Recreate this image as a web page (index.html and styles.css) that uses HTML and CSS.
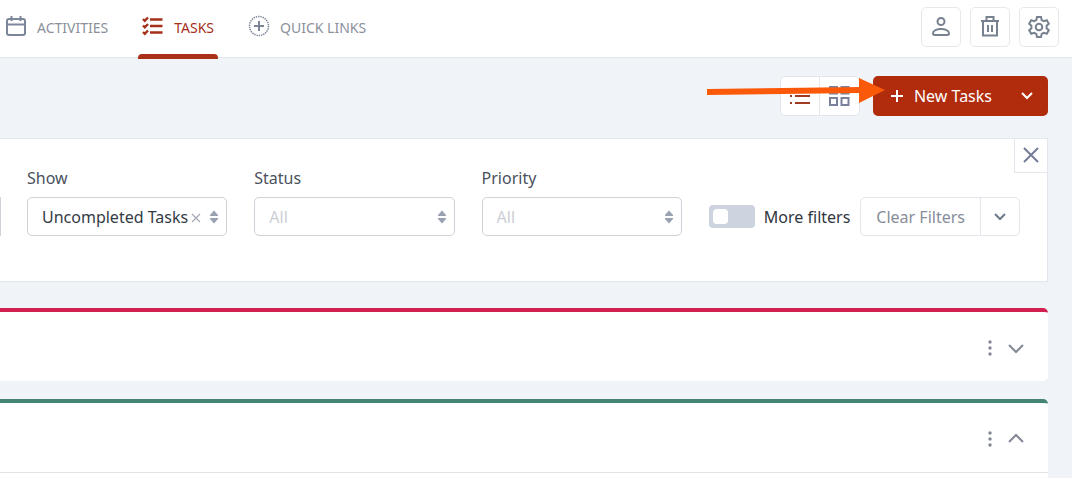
FILE: index.html
```html
<!DOCTYPE html>
<html lang="en">
<head>
    <meta charset="UTF-8">
    <meta name="viewport" content="width=device-width, initial-scale=1.0">
    <title>Tasks</title>
    <link rel="stylesheet" href="styles.css">
</head>
<body>
    <header class="topbar">
        <nav class="tabs">
            <a class="tab" href="#activities">
                <svg class="tab-icon" viewBox="0 0 22 22"><rect x="2" y="4" width="18" height="16" rx="2"/><path d="M2 9.500H20M6.500 1V6M15.500 1V6"/></svg>
                Activities
            </a>
            <a class="tab active" href="#tasks">
                <svg class="tab-icon" viewBox="0 0 22 22"><path d="M8 4.500H20.500M8 11H20.500M8 17.500H20.500M1 4L2.800 5.800L6 2.500M1 10.500L2.800 12.300L6 9M1 17L2.800 18.800L6 15.500" stroke-width="2.400"/></svg>
                Tasks
            </a>
            <a class="tab" href="#links">
                <svg class="tab-icon" viewBox="0 0 22 22"><circle cx="11" cy="11" r="9.500" stroke-width="1.500" stroke-dasharray="1.400 0.890"/><path d="M11 6V16M6 11H16"/></svg>
                Quick Links
            </a>
        </nav>
        <div class="tools">
            <button class="tool" aria-label="Profile">
                <svg viewBox="0 0 24 24"><circle cx="12" cy="6.500" r="3.500"/><path d="M4 18.500C4 12.500 20 12.500 20 18.500C20 19.500 19 20 18 20H6C5 20 4 19.500 4 18.500Z"/></svg>
            </button>
            <button class="tool" aria-label="Trash">
                <svg viewBox="0 0 24 24"><path d="M3 6H21M5 6V20.500H19V6M8.500 6V2H15.500V6M10 10V17M14 10V17"/></svg>
            </button>
            <button class="tool" aria-label="Settings">
                <svg viewBox="0 0 24 24"><circle cx="12" cy="12" r="3.300"/><path d="M10 2H14L14.700 5L16.800 6.200L19.800 5.300L21.800 8.700L19.600 10.800V13.200L21.800 15.300L19.800 18.700L16.800 17.800L14.700 19L14 22H10L9.300 19L7.200 17.800L4.200 18.700L2.200 15.300L4.400 13.200V10.800L2.200 8.700L4.200 5.300L7.200 6.200L9.300 5Z"/></svg>
            </button>
        </div>
    </header>

    <main class="content">
        <div class="toolbar">
            <div class="views">
                <button class="view active" aria-label="List view">
                    <svg viewBox="0 0 22 22"><path d="M6 4H21M6 11H21M6 18H21M1 4H3M1 11H3M1 18H3"/></svg>
                </button>
                <button class="view" aria-label="Grid view">
                    <svg viewBox="0 0 22 22"><path d="M2 2H9V8.500H2ZM13.500 2H20.500V8.500H13.500ZM2 13H9V20H2ZM13.500 13H20.500V20H13.500Z"/></svg>
                </button>
            </div>
            <div class="new-tasks">
                <button class="new-main">
                    <svg viewBox="0 0 14 14"><path d="M7 1V13M1 7H13"/></svg>
                    New Tasks
                </button>
                <button class="new-more" aria-label="More options">
                    <svg viewBox="0 0 14 14"><path d="M2 4L7 9L12 4"/></svg>
                </button>
            </div>
            <svg class="pointer" viewBox="0 0 178 26"><path d="M0 12L153 10V16L0 18Z"/><path d="M152 1L178 13L152 26Z"/></svg>
        </div>

        <section class="filters">
            <button class="close" aria-label="Close filters">
                <svg viewBox="0 0 18 18"><path d="M2 2L16 16M16 2L2 16"/></svg>
            </button>
            <div class="filter-edge"></div>
            <div class="field">
                <label for="show">Show</label>
                <div class="select">
                    <select id="show"><option>Uncompleted Tasks</option></select>
                    <button class="clear" aria-label="Clear show filter"><svg viewBox="0 0 10 10"><path d="M1 1L9 9M9 1L1 9"/></svg></button>
                    <svg class="sort" viewBox="0 0 10 14"><path d="M1 6V5L5 0.500L9 5V6ZM1 8V9L5 13.500L9 9V8Z"/></svg>
                </div>
            </div>
            <div class="field">
                <label for="status">Status</label>
                <div class="select">
                    <select id="status" class="empty"><option>All</option></select>
                    <svg class="sort" viewBox="0 0 10 14"><path d="M1 6V5L5 0.500L9 5V6ZM1 8V9L5 13.500L9 9V8Z"/></svg>
                </div>
            </div>
            <div class="field">
                <label for="priority">Priority</label>
                <div class="select">
                    <select id="priority" class="empty"><option>All</option></select>
                    <svg class="sort" viewBox="0 0 10 14"><path d="M1 6V5L5 0.500L9 5V6ZM1 8V9L5 13.500L9 9V8Z"/></svg>
                </div>
            </div>
            <div class="filter-actions">
                <label class="switch"><input type="checkbox">More filters</label>
                <div class="clear-group">
                    <button class="clear-main">Clear Filters</button>
                    <button class="clear-more" aria-label="More filter options">
                        <svg viewBox="0 0 14 14"><path d="M2 4L7 9L12 4"/></svg>
                    </button>
                </div>
            </div>
        </section>

        <section class="group red">
            <div class="group-head">
                <button class="group-btn dots" aria-label="Group menu"><svg viewBox="0 0 6 18"><circle cx="3" cy="3" r="1.700"/><circle cx="3" cy="9" r="1.700"/><circle cx="3" cy="15" r="1.700"/></svg></button>
                <button class="group-btn chevron" aria-label="Expand"><svg viewBox="0 0 18 18"><path d="M2 6L9 13L16 6"/></svg></button>
            </div>
        </section>
        <section class="group green">
            <div class="group-head">
                <button class="group-btn dots" aria-label="Group menu"><svg viewBox="0 0 6 18"><circle cx="3" cy="3" r="1.700"/><circle cx="3" cy="9" r="1.700"/><circle cx="3" cy="15" r="1.700"/></svg></button>
                <button class="group-btn chevron" aria-label="Collapse"><svg viewBox="0 0 18 18"><path d="M2 12L9 5L16 12"/></svg></button>
            </div>
            <div class="group-body"></div>
        </section>
    </main>
</body>
</html>
```
FILE: styles.css
```css
* {
    box-sizing: border-box;
}
body {
    display: flex;
    flex-direction: column;
    margin: 0;
    min-height: 100vh;
    background: #f0f3f8;
    color: #4a515c;
    font-family: "Noto Sans", "Open Sans", sans-serif;
    font-size: 16px;
    line-height: 22px;
}
button {
    display: flex;
    align-items: center;
    justify-content: center;
    margin: 0;
    padding: 0;
    border: none;
    background: none;
    color: inherit;
    font: inherit;
    cursor: pointer;
}
svg {
    display: block;
    flex: none;
    fill: none;
    stroke: currentColor;
    stroke-width: 2;
}

/* top bar */
.topbar {
    display: flex;
    justify-content: space-between;
    height: 58px;
    padding: 0 13px 0 1px;
    background: #fff;
    border-bottom: 1px solid #e3e6ec;
}
.tabs {
    display: flex;
    gap: 26px;
}
.tab {
    position: relative;
    display: flex;
    align-items: center;
    gap: 10px;
    padding: 0 4px 2px;
    color: #8b919b;
    font-size: 14px;
    text-decoration: none;
    text-transform: uppercase;
}
.tab-icon {
    width: 22px;
    height: 22px;
    margin-bottom: 3px;
    color: #7c8599;
}
.tab.active,
.tab.active .tab-icon {
    color: #a5301a;
}
.tab.active::after {
    content: "";
    position: absolute;
    left: 0;
    right: 0;
    bottom: -2px;
    height: 5px;
    border-radius: 4px 4px 0 0;
    background: #a9311a;
}
.tools {
    display: flex;
    gap: 9px;
    padding-top: 7px;
}
.tool {
    width: 40px;
    height: 40px;
    border: 1px solid #e6e8ed;
    border-radius: 5px;
    color: #77818f;
}
.tool svg {
    width: 24px;
    height: 24px;
}

/* toolbar */
.content {
    display: flex;
    flex: 1;
    flex-direction: column;
    padding: 18px 24px 0 0;
}
.toolbar {
    position: relative;
    display: flex;
    justify-content: flex-end;
    gap: 13px;
}
.views {
    display: flex;
    border: 1px solid #e3e6ec;
    border-radius: 5px;
    background: #fff;
}
.view {
    width: 39px;
    height: 38px;
    color: #7a819c;
}
.view.active {
    border-right: 1px solid #e3e6ec;
    color: #a03a22;
}
.view svg {
    width: 22px;
    height: 22px;
}
.new-tasks {
    display: flex;
    height: 40px;
    border-radius: 5px;
    background: #b12c0c;
    color: #fff;
}
.new-main {
    gap: 10px;
    padding-left: 17px;
}
.new-main svg,
.new-more svg,
.clear-more svg {
    width: 14px;
    height: 14px;
}
.new-more {
    width: 56px;
    padding-left: 14px;
}
.pointer {
    position: absolute;
    top: 1px;
    right: 163px;
    width: 178px;
    height: 26px;
    fill: #fa590a;
    stroke: none;
    pointer-events: none;
}

/* filters */
.filters {
    position: relative;
    display: flex;
    align-items: flex-end;
    gap: 27px;
    height: 144px;
    margin-top: 22px;
    padding: 0 27px 45px 0;
    background: #fff;
    border: 1px solid #e3e6ec;
    border-left: none;
}
.close {
    position: absolute;
    top: 0;
    right: 0;
    width: 33px;
    height: 34px;
    padding-bottom: 2px;
    border: 1px solid #e3e6ec;
    border-width: 0 0 1px 1px;
    color: #757c98;
}
.close svg {
    width: 18px;
    height: 18px;
}
.filter-edge {
    width: 1px;
    height: 39px;
    margin-right: -1px;
    background: #cfd2d8;
}
.field {
    flex: 1;
}
.field label {
    display: block;
    margin-bottom: 8px;
}
.select {
    position: relative;
}
.select select {
    display: block;
    width: 100%;
    height: 39px;
    padding: 0 25px 0 14px;
    border: 1px solid #cfd2d8;
    border-radius: 5px;
    background: #fff;
    color: #343b45;
    font: inherit;
    appearance: none;
}
.select select.empty {
    color: #cbced4;
}
.clear {
    position: absolute;
    top: 16px;
    right: 26px;
    color: #a3a8b2;
}
.clear svg {
    width: 10px;
    height: 10px;
    stroke-width: 1.200;
}
.sort {
    position: absolute;
    top: 13px;
    right: 8px;
    width: 10px;
    height: 14px;
    fill: #9aa1b0;
    stroke: none;
    pointer-events: none;
}
.filter-actions {
    display: flex;
    align-items: center;
    gap: 10px;
}
.switch {
    display: flex;
    align-items: center;
    gap: 9px;
    color: #2f3640;
    white-space: nowrap;
}
.switch input {
    width: 46px;
    height: 23px;
    margin: 0;
    padding: 4px;
    border-radius: 4px;
    background: #cdd4e0;
    appearance: none;
}
.switch input::before {
    content: "";
    display: block;
    width: 15px;
    height: 15px;
    border-radius: 4px;
    background: #fff;
}
.clear-group {
    display: flex;
    height: 39px;
    border: 1px solid #e3e6ec;
    border-radius: 5px;
    color: #868d98;
}
.clear-main {
    padding: 0 15px;
    white-space: nowrap;
}
.clear-more {
    width: 39px;
    border-left: 1px solid #e3e6ec;
    color: #6f7b8c;
}

/* task groups */
.group {
    margin-top: 18px;
    border-top: 4px solid;
    border-radius: 0 5px 5px 0;
    background: #fff;
}
.filters + .group {
    margin-top: 26px;
}
.group.red {
    border-color: #d1204f;
}
.group.green {
    flex: 1;
    border-color: #438572;
    border-bottom-right-radius: 0;
}
.group-head {
    display: flex;
    align-items: center;
    justify-content: flex-end;
    gap: 14px;
    height: 69px;
    padding: 2px 23px 0 0;
    color: #838895;
}
.group-btn svg {
    height: 18px;
}
.dots svg {
    width: 6px;
    fill: currentColor;
    stroke: none;
}
.chevron svg {
    width: 18px;
}
.group-body {
    border-top: 1px solid #e1e4e9;
}
```
